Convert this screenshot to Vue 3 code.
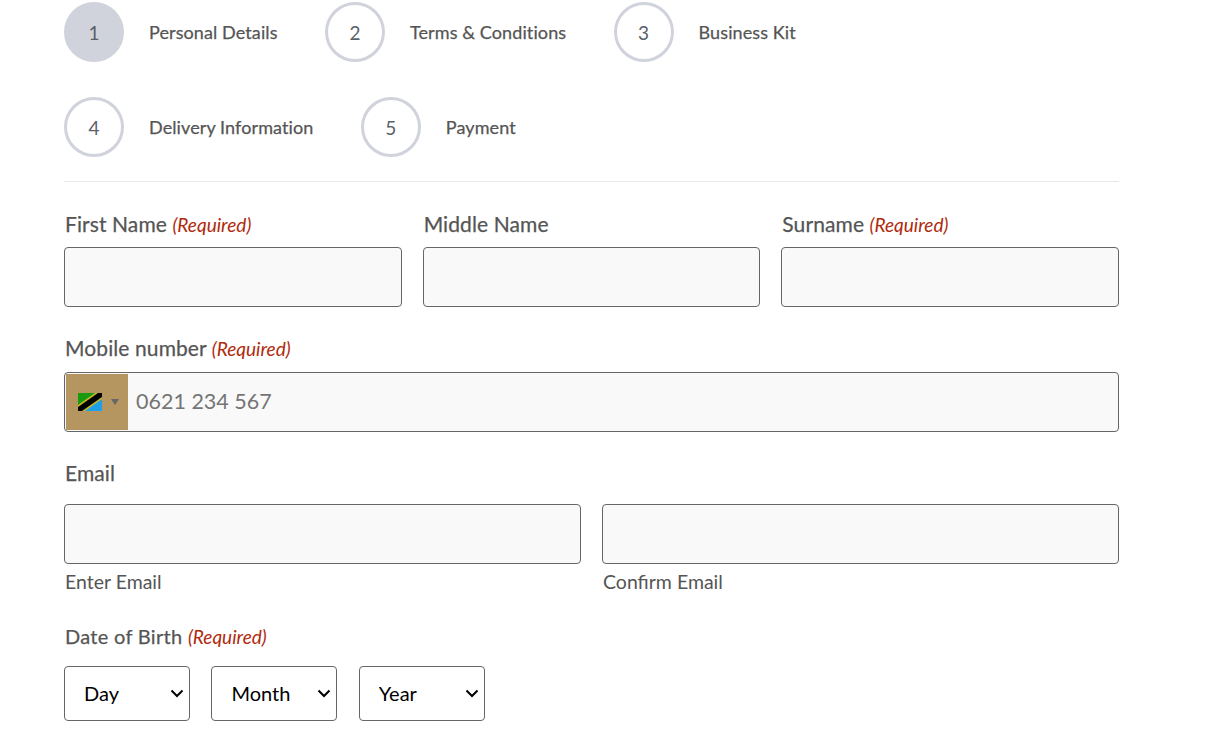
<script setup>
const steps = [
  [
    { num: 1, title: 'Personal Details', active: true },
    { num: 2, title: 'Terms & Conditions' },
    { num: 3, title: 'Business Kit' },
  ],
  [
    { num: 4, title: 'Delivery Information' },
    { num: 5, title: 'Payment' },
  ],
]

const nameFields = [
  { label: 'First Name', required: true },
  { label: 'Middle Name', required: false },
  { label: 'Surname', required: true },
]

const dobFields = ['Day', 'Month', 'Year']
</script>

<template>
  <div class="page">
    <div class="steps">
      <div v-for="(row, i) in steps" :key="i" class="step-row">
        <div v-for="step in row" :key="step.num" class="step">
          <span class="circle" :class="{ active: step.active }">{{ step.num }}</span>
          <span class="step-title">{{ step.title }}</span>
        </div>
      </div>
    </div>

    <form class="form" @submit.prevent>
      <div class="name-row">
        <div v-for="field in nameFields" :key="field.label" class="field">
          <label class="label">{{ field.label }} <em v-if="field.required">(Required)</em></label>
          <input class="text-input" type="text" />
        </div>
      </div>

      <div class="mobile">
        <label class="label">Mobile number <em>(Required)</em></label>
        <div class="phone">
          <div class="flag-box">
            <svg class="flag" viewBox="0 0 24 18" width="24" height="18">
              <rect width="24" height="18" fill="#1a9a10" />
              <polygon points="24,0 24,18 0,18" fill="#1e9fe8" />
              <polygon points="0,18 0,12 17,0 24,0 24,6 7,18" fill="#c9b52a" />
              <polygon points="0,18 0,14 20,0 24,0 24,4 4,18" fill="#000" />
            </svg>
            <span class="caret"></span>
          </div>
          <input class="phone-input" type="tel" placeholder="0621 234 567" />
        </div>
      </div>

      <div class="email">
        <label class="label">Email</label>
        <div class="email-row">
          <div class="field">
            <input class="text-input" type="email" />
            <span class="sub-label">Enter Email</span>
          </div>
          <div class="field">
            <input class="text-input" type="email" />
            <span class="sub-label">Confirm Email</span>
          </div>
        </div>
      </div>

      <div class="dob">
        <label class="label dob-label">Date of Birth <em>(Required)</em></label>
        <div class="dob-row">
          <select v-for="name in dobFields" :key="name" class="select">
            <option>{{ name }}</option>
          </select>
        </div>
      </div>
    </form>
  </div>
</template>

<style>
html, body {
  background: #fff;
  overflow: hidden;
}
</style>

<style scoped>
.page {
  width: 1055px;
  margin-left: 64px;
  padding-top: 2px;
  font-family: "Lato", "Liberation Sans", sans-serif;
  color: #555;
}

.steps {
  display: flex;
  flex-direction: column;
  gap: 35px;
  padding-bottom: 24px;
  border-bottom: 1px solid #e8e8e8;
}

.step-row {
  display: flex;
  gap: 47.4px;
}

.step {
  display: flex;
  align-items: center;
  gap: 25px;
}

.circle {
  box-sizing: border-box;
  width: 60px;
  height: 60px;
  border: 3px solid #d1d3dc;
  border-radius: 50%;
  display: flex;
  align-items: center;
  justify-content: center;
  font-size: 19px;
  color: #5a616a;
}

.circle.active {
  background: #d1d3dc;
}

.step-title {
  font-size: 18px;
  letter-spacing: 0.1px;
  color: #555;
  -webkit-text-stroke: 0.25px #555;
}

.form {
  display: flex;
  flex-direction: column;
}

.name-row {
  display: grid;
  grid-template-columns: repeat(3, 1fr);
  gap: 21px;
  margin-top: 27px;
}

.field {
  display: flex;
  flex-direction: column;
}

.label {
  display: block;
  height: 30px;
  line-height: 30px;
  padding-left: 1px;
  font-size: 21px;
  letter-spacing: 0.1px;
  color: #555;
  -webkit-text-stroke: 0.25px #555;
}

.dob-label {
  font-size: 20px;
  letter-spacing: 0.3px;
}

.label em {
  font-size: 19px;
  letter-spacing: 0;
  color: #b02a0c;
  -webkit-text-stroke: 0;
}

.name-row .label {
  margin-bottom: 8px;
}

.text-input {
  box-sizing: border-box;
  width: 100%;
  height: 60px;
  border: 1px solid #666;
  border-radius: 4px;
  background: #f9f9f9;
  outline: none;
}

.mobile {
  margin-top: 26px;
}

.mobile .label {
  margin-bottom: 9px;
}

.phone {
  box-sizing: border-box;
  display: flex;
  height: 60px;
  border: 1px solid #666;
  border-radius: 4px;
  background: #f9f9f9;
  padding: 1px 0 1px 1px;
}

.flag-box {
  width: 62px;
  background: #b59660;
  display: flex;
  align-items: center;
  padding-left: 12px;
  box-sizing: border-box;
  flex-shrink: 0;
}

.flag {
  display: block;
}

.caret {
  width: 0;
  height: 0;
  margin-left: 9px;
  border-left: 4px solid transparent;
  border-right: 4px solid transparent;
  border-top: 6px solid #666;
}

.phone-input {
  flex: 1;
  border: none;
  background: transparent;
  outline: none;
  padding: 0 8px 3px;
  font-family: inherit;
  font-size: 21.5px;
  color: #555;
}

.phone-input::placeholder {
  color: #757575;
}

.email {
  margin-top: 26px;
}

.email .label {
  margin-bottom: 16px;
}

.email-row {
  display: grid;
  grid-template-columns: 1fr 1fr;
  gap: 21px;
}

.sub-label {
  height: 36px;
  line-height: 36px;
  padding-left: 1px;
  font-size: 19.5px;
  color: #555;
}

.dob {
  margin-top: 21px;
}

.dob .label {
  margin-bottom: 15px;
}

.dob-row {
  display: flex;
  gap: 21.4px;
}

.select {
  box-sizing: border-box;
  width: 126px;
  height: 55px;
  padding: 0 19px 2px;
  border: 1px solid #666;
  border-radius: 4px;
  appearance: none;
  background: #fff url("data:image/svg+xml,%3Csvg xmlns='http://www.w3.org/2000/svg' width='14' height='9' viewBox='0 0 14 9'%3E%3Cpath d='M1.5 1.5L7 7l5.5-5.5' fill='none' stroke='%23000' stroke-width='2'/%3E%3C/svg%3E") no-repeat right 5px center;
  font-family: inherit;
  font-size: 20px;
  color: #000;
}
</style>
